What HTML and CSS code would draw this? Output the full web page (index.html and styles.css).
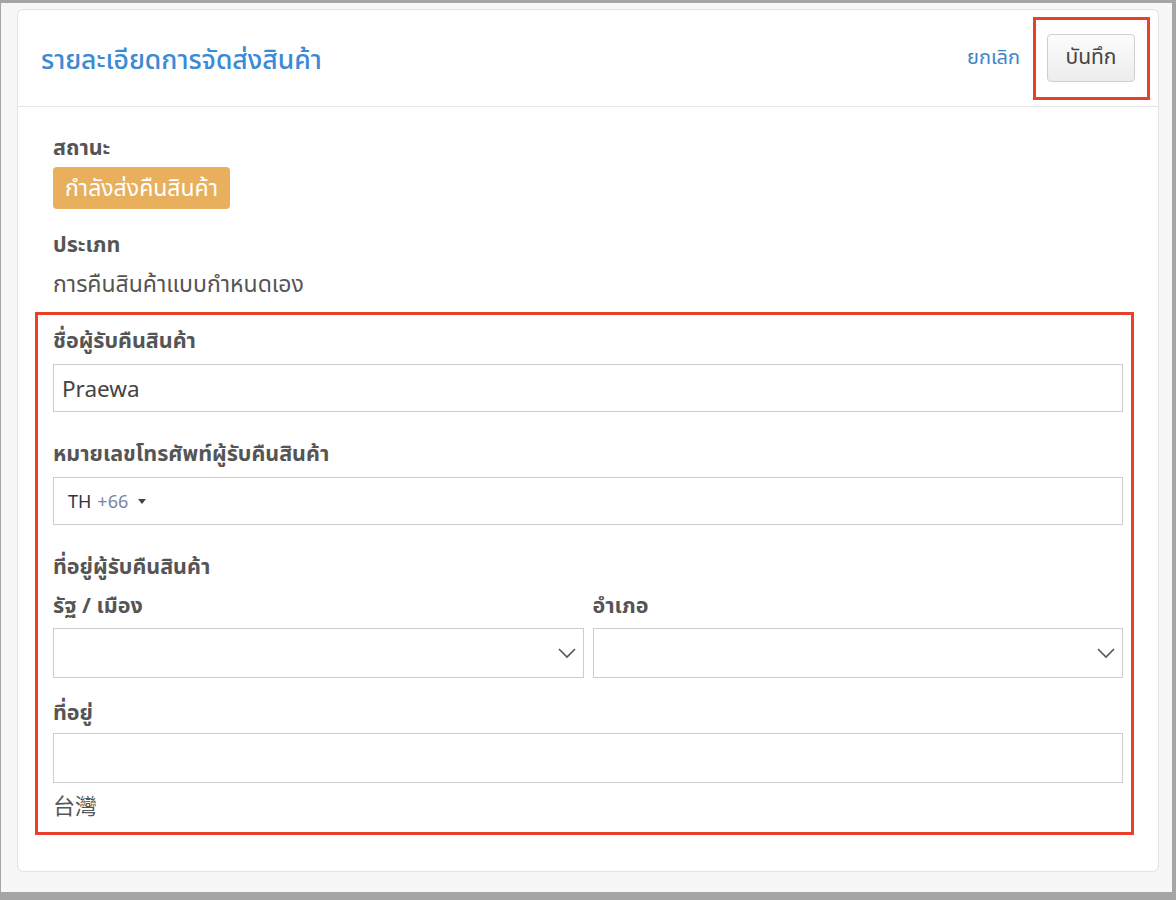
FILE: index.html
```html
<!DOCTYPE html>
<html lang="th">
<head>
    <meta charset="UTF-8">
    <meta name="viewport" content="width=device-width, initial-scale=1.0">
    <title>รายละเอียดการจัดส่งสินค้า</title>
    <link rel="stylesheet" href="styles.css">
</head>
<body>
    <div class="frame">
        <div class="card">
            <div class="card-header">
                <h2 class="title">รายละเอียดการจัดส่งสินค้า</h2>
                <div class="actions">
                    <a class="cancel" href="#">ยกเลิก</a>
                    <div class="mark mark-save">
                        <button class="btn-save" type="button">บันทึก</button>
                    </div>
                </div>
            </div>
            <div class="card-body">
                <div class="label">สถานะ</div>
                <span class="badge">กำลังส่งคืนสินค้า</span>

                <div class="label label-type">ประเภท</div>
                <div class="value">การคืนสินค้าแบบกำหนดเอง</div>

                <div class="mark mark-form">
                    <div class="field">
                        <div class="label">ชื่อผู้รับคืนสินค้า</div>
                        <div class="input">Praewa</div>
                    </div>
                    <div class="field">
                        <div class="label">หมายเลขโทรศัพท์ผู้รับคืนสินค้า</div>
                        <div class="input phone">
                            <span class="cc">TH</span>
                            <span class="dial">+66</span>
                            <span class="caret"></span>
                        </div>
                    </div>
                    <div class="field">
                        <div class="label">ที่อยู่ผู้รับคืนสินค้า</div>
                        <div class="row">
                            <div class="col">
                                <div class="label">รัฐ / เมือง</div>
                                <div class="input select">
                                    <svg width="20" height="12" viewBox="0 0 20 12"><path d="M2 2 L10 10 L18 2" fill="none" stroke="#555" stroke-width="1.6"/></svg>
                                </div>
                            </div>
                            <div class="col">
                                <div class="label">อำเภอ</div>
                                <div class="input select">
                                    <svg width="20" height="12" viewBox="0 0 20 12"><path d="M2 2 L10 10 L18 2" fill="none" stroke="#555" stroke-width="1.6"/></svg>
                                </div>
                            </div>
                        </div>
                    </div>
                    <div class="field field-address">
                        <div class="label">ที่อยู่</div>
                        <div class="input"></div>
                        <div class="country">台灣</div>
                    </div>
                </div>
            </div>
        </div>
    </div>
</body>
</html>
```

FILE: styles.css
```css
html, body {
    margin: 0;
    padding: 0;
}
body {
    background-color: #a5a5a5;
    font-family: "Noto Sans", "Noto Sans Thai", "Noto Sans CJK TC", sans-serif;
    color: #555;
    height: 900px;
    overflow: hidden;
}
.frame {
    margin: 3px 4px 0 1px;
    height: 889px;
    background-color: #f7f7f7;
    padding: 6px 13px 0 16px;
    box-sizing: border-box;
}
.card {
    background: #fff;
    border: 1px solid #e2e2e2;
    border-radius: 6px;
}
.card-header {
    display: flex;
    align-items: center;
    justify-content: space-between;
    height: 96px;
    padding: 0 8px 0 23px;
    border-bottom: 1px solid #e6e6e6;
}
.title {
    margin: 0;
    padding-top: 6px;
    font-size: 26.5px;
    font-weight: 500;
    color: #3b8ad6;
}
.actions {
    display: flex;
    align-items: center;
    gap: 13px;
}
.cancel {
    color: #3f82c7;
    text-decoration: none;
    font-size: 20px;
}
.mark {
    border: 3px solid #e8402a;
}
.mark-save {
    padding: 14px 12px 15px 11px;
}
.btn-save {
    width: 88px;
    height: 48px;
    border: 1px solid #cfcfcf;
    border-radius: 4px;
    background: linear-gradient(#fcfcfc, #ececec);
    font-family: inherit;
    font-size: 21px;
    color: #444;
    padding: 0;
}
.card-body {
    padding: 28px 35px 36px 35px;
}
.label {
    font-size: 21.5px;
    font-weight: 700;
    line-height: 23px;
    padding-bottom: 4px;
    color: #555;
}
.badge {
    display: inline-block;
    margin-top: 5px;
    padding: 0 12px;
    height: 42px;
    line-height: 40px;
    background-color: #e8b05c;
    color: #fff;
    font-size: 23px;
    border-radius: 4px;
}
.label-type {
    margin-top: 23px;
}
.value {
    margin-top: 13px;
    font-size: 23px;
    line-height: 22px;
    padding-bottom: 5px;
}
.mark-form {
    margin: 13px -11px 0 -18px;
    padding: 13px 8px 11px 15px;
}
.field + .field {
    margin-top: 29px;
}
.input {
    margin-top: 9px;
    height: 48px;
    border: 1px solid #cdcdcd;
    box-sizing: border-box;
    display: flex;
    align-items: center;
    padding: 0 8px;
    font-size: 22.5px;
    color: #444;
}
.phone {
    padding-left: 14px;
    font-size: 18px;
}
.cc {
    color: #2f3542;
}
.dial {
    margin-left: 6px;
    color: #7b86a0;
}
.caret {
    margin-left: 10px;
    border-left: 4px solid transparent;
    border-right: 4px solid transparent;
    border-top: 5px solid #444;
}
.row {
    display: flex;
    gap: 9px;
    margin-top: 12px;
}
.col {
    flex: 1;
}
.select {
    justify-content: flex-end;
    margin-top: 8px;
    height: 50px;
    padding-right: 6px;
}
.field-address {
    margin-top: 22px !important;
}
.field-address .input {
    margin-top: 6px;
    height: 50px;
}
.country {
    margin-top: 11px;
    font-size: 22px;
    line-height: 22px;
    padding-bottom: 5px;
    color: #555;
}
```
